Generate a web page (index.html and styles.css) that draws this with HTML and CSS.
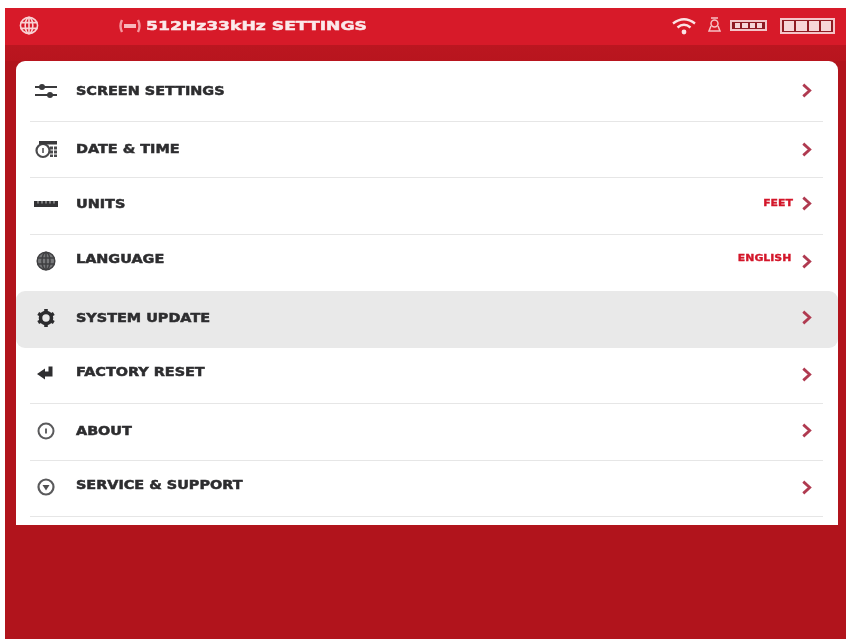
FILE: index.html
```html
<!DOCTYPE html>
<html lang="en">
<head>
<meta charset="utf-8">
<title>Settings</title>
<link rel="stylesheet" href="styles.css">
</head>
<body>
<div class="device">
  <header class="topbar">
    <svg class="ic-globe" viewBox="0 0 20 20"><g fill="none" stroke="#f9d2d4" stroke-width="1.700"><ellipse cx="10" cy="10" rx="9" ry="8.500"/><ellipse cx="10" cy="10" rx="4" ry="8.500"/><path d="M10 1v18M1 7h18M1 13h18"/></g></svg>
    <div class="title">
      <svg class="ic-signal" viewBox="0 0 24 14"><g fill="none" stroke="#f59aa0" stroke-width="2.400"><path d="M4 1Q1 7 4 13M20 1Q23 7 20 13"/></g><rect x="6" y="5" width="12" height="4" fill="#f8b8bc"/></svg>
      <span class="title-text">512Hz33kHz SETTINGS</span>
    </div>
    <div class="status">
      <svg class="ic-wifi" viewBox="0 0 24 18"><g fill="none" stroke="#fbe3e4" stroke-width="2.400"><path d="M1 6.500Q12-2 23 6.500"/><path d="M5.500 10.500Q12 5 18.500 10.500"/></g><circle cx="12" cy="15" r="2.400" fill="#fbe3e4"/></svg>
      <svg class="ic-weight" viewBox="0 0 15 15"><g fill="none" stroke="#f7c0c4" stroke-width="1.500"><path d="M4 1h7"/><circle cx="7.500" cy="6.500" r="3.500"/><path d="M4 9L2 14h11l-2-5"/></g></svg>
      <div class="batt-s"><i></i><i></i><i></i><i></i></div>
      <div class="batt-l"><i></i><i></i><i></i><i></i></div>
    </div>
  </header>
  <div class="strip"></div>
  <main class="card">
    <div class="row row-first">
      <span class="icon"><svg viewBox="0 0 24 24" width="24" height="24"><g stroke="#3a3a3c" stroke-width="1.800"><path d="M1 8h22M1 16h22"/></g><circle cx="8" cy="8" r="3" fill="#3a3a3c"/><circle cx="16" cy="16" r="3" fill="#3a3a3c"/></svg></span>
      <span class="label">SCREEN SETTINGS</span>
      <svg class="chev" viewBox="0 0 10 14"><path d="M2 1.500L8 7l-6 5.500" /></svg>
    </div>
    <div class="row">
      <span class="icon"><svg viewBox="0 0 24 24" width="24" height="24"><circle cx="9" cy="13.500" r="6.500" fill="none" stroke="#4a4a4c" stroke-width="2.200"/><path d="M9 11v5" stroke="#4a4a4c" stroke-width="1.500"/><path d="M5 4h18v3.500H5z" fill="#3a3a3c"/><path d="M16 9.500h3v3h-3zM20 9.500h3v3h-3zM16 13.500h3v3h-3zM20 13.500h3v3h-3zM16 17.500h3v2.500h-3zM20 17.500h3v2.500h-3z" fill="#4a4a4c"/></svg></span>
      <span class="label">DATE &amp; TIME</span>
      <svg class="chev" viewBox="0 0 10 14"><path d="M2 1.500L8 7l-6 5.500" /></svg>
    </div>
    <div class="row row-up1">
      <span class="icon"><svg viewBox="0 0 26 24" width="26" height="24"><path d="M1 9h24v6H1z" fill="#333335"/><path d="M5 9v2.500M9 9v2.500M13 9v2.500M17 9v2.500M21 9v2.500" stroke="#c8c8c8" stroke-width="1"/></svg></span>
      <span class="label">UNITS</span>
      <span class="value">FEET</span>
      <svg class="chev" viewBox="0 0 10 14"><path d="M2 1.500L8 7l-6 5.500" /></svg>
    </div>
    <div class="row row-up2 row-before-active">
      <span class="icon icon-low"><svg viewBox="0 0 24 24" width="24" height="24"><g fill="none" stroke="#3f3f41" stroke-width="1.500"><circle cx="12" cy="12" r="8.800" fill="#77787a"/><ellipse cx="12" cy="12" rx="4" ry="8.800"/><path d="M12 3v18M3.500 9h17M3.500 15h17"/></g></svg></span>
      <span class="label">LANGUAGE</span>
      <span class="value value-wide">ENGLISH</span>
      <svg class="chev chev-low" viewBox="0 0 10 14"><path d="M2 1.500L8 7l-6 5.500" /></svg>
    </div>
    <div class="row row-active">
      <span class="icon"><svg viewBox="0 0 24 24" width="24" height="24"><circle cx="12" cy="12" r="5.500" fill="none" stroke="#2c2c2e" stroke-width="3.600"/><g stroke="#2c2c2e" stroke-width="3.600"><path d="M12 3v3M12 18v3M4.200 7.500l2.600 1.500M17.200 15l2.600 1.500M4.200 16.500l2.600-1.500M17.200 9l2.600-1.500"/></g></svg></span>
      <span class="label">SYSTEM UPDATE</span>
      <svg class="chev" viewBox="0 0 10 14"><path d="M2 1.500L8 7l-6 5.500" /></svg>
    </div>
    <div class="row row-up2">
      <span class="icon icon-low"><svg viewBox="0 0 24 24" width="24" height="24"><path d="M3 12L11 6.500V9.500H14.500V4.500H18.500V14.500H11V17.500Z" fill="#2e2e30"/></svg></span>
      <span class="label">FACTORY RESET</span>
      <svg class="chev chev-low" viewBox="0 0 10 14"><path d="M2 1.500L8 7l-6 5.500" /></svg>
    </div>
    <div class="row row-up0">
      <span class="icon"><svg viewBox="0 0 24 24" width="24" height="24"><circle cx="12" cy="12" r="7.500" fill="none" stroke="#5a5a5c" stroke-width="2"/><path d="M12 9.500v5" stroke="#4a4a4c" stroke-width="1.700"/></svg></span>
      <span class="label">ABOUT</span>
      <svg class="chev" viewBox="0 0 10 14"><path d="M2 1.500L8 7l-6 5.500" /></svg>
    </div>
    <div class="row row-up2">
      <span class="icon icon-low"><svg viewBox="0 0 24 24" width="24" height="24"><circle cx="12" cy="12" r="7.500" fill="none" stroke="#5a5a5c" stroke-width="2.200"/><path d="M8.500 10h7L12 15.500z" fill="#4f4f51"/></svg></span>
      <span class="label">SERVICE &amp; SUPPORT</span>
      <svg class="chev chev-low" viewBox="0 0 10 14"><path d="M2 1.500L8 7l-6 5.500" /></svg>
    </div>
  </main>
</div>
</body>
</html>
```
FILE: styles.css
```css
* { box-sizing: border-box; }
html, body { margin: 0; height: 100%; background: #fff; overflow: hidden; }
.device {
  width: 841px;
  height: 631px;
  margin: 8px 0 0 5px;
  background: #b1141c;
  display: flex;
  flex-direction: column;
  font-family: "DejaVu Sans", sans-serif;
  font-weight: 700;
  filter: blur(0.5px);
}
.topbar {
  height: 37px;
  background: #d71a29;
  display: flex;
  align-items: center;
  padding: 0 11px 2px 14px;
}
.ic-globe { width: 20px; height: 19px; }
.title { display: flex; align-items: center; margin-left: 79px; }
.ic-signal { width: 24px; height: 14px; }
.title-text {
  display: inline-block;
  color: #fbe9ea;
  font-size: 13px;
  margin-left: 4px;
  white-space: nowrap;
  transform: scaleX(1.32);
  transform-origin: left center;
  -webkit-text-stroke: 0.5px #fbe9ea;
}
.status { margin-left: auto; display: flex; align-items: center; }
.ic-wifi { width: 24px; height: 18px; }
.ic-weight { width: 15px; height: 15px; margin-left: 11px; margin-top: -2px; }
.batt-s, .batt-l { display: flex; border: 2px solid #f4c5c8; }
.batt-s { width: 37px; height: 11px; margin-left: 8px; gap: 2px; padding: 1px 3px; background: #8f1a22; }
.batt-s i { flex: 1; background: #f6d5d7; }
.batt-l { width: 55px; height: 16px; margin-left: 13px; gap: 2px; padding: 1px 2px; background: #8f1a22; }
.batt-l i { flex: 1; background: #f6d5d7; }
.strip { height: 16px; background: linear-gradient(#bb1620, #b8151e); }
.card {
  margin: 0 8px 0 11px;
  height: 464px;
  background: #fff;
  border-radius: 9px 9px 0 0;
  padding-bottom: 9px;
  display: flex;
  flex-direction: column;
}
.row {
  flex: 0 0 56.500px;
  display: flex;
  align-items: center;
  margin: 0 15px 0 14px;
  border-bottom: 1.500px solid #e6e6e6;
  color: #2d2d2f;
}
.row-first { flex-basis: 60.500px; }
.row-up0 { padding-bottom: 2px; }
.row-up1 { padding-bottom: 4px; }
.row-up2 { padding-bottom: 7px; }
.row-before-active { border-bottom-color: transparent; }
.row-active {
  margin: 0;
  padding: 0 15px 3px 14px;
  background: #e9e9e9;
  border-bottom: 0;
  border-radius: 9px;
}
.icon { width: 32px; height: 24px; display: flex; justify-content: center; flex: none; }
.icon-low { margin-top: 5px; }
.label {
  display: inline-block;
  margin-left: 14px;
  font-size: 12px;
  white-space: nowrap;
  transform: scaleX(1.2);
  transform-origin: left center;
  -webkit-text-stroke: 0.5px #2d2d2f;
}
.value {
  display: inline-block;
  margin-left: auto;
  color: #d3162a;
  font-size: 8px;
  transform: scaleX(1.36);
  transform-origin: right center;
  -webkit-text-stroke: 0.3px #d3162a;
}
.value-wide { margin-right: 2px; }
.chev {
  width: 11px;
  height: 15px;
  margin: 0 11px 0 auto;
  fill: none;
  stroke: #b03a50;
  stroke-width: 2.600;
}
.chev-low { margin-top: 5px; }
.value + .chev { margin-left: 8px; }
```
